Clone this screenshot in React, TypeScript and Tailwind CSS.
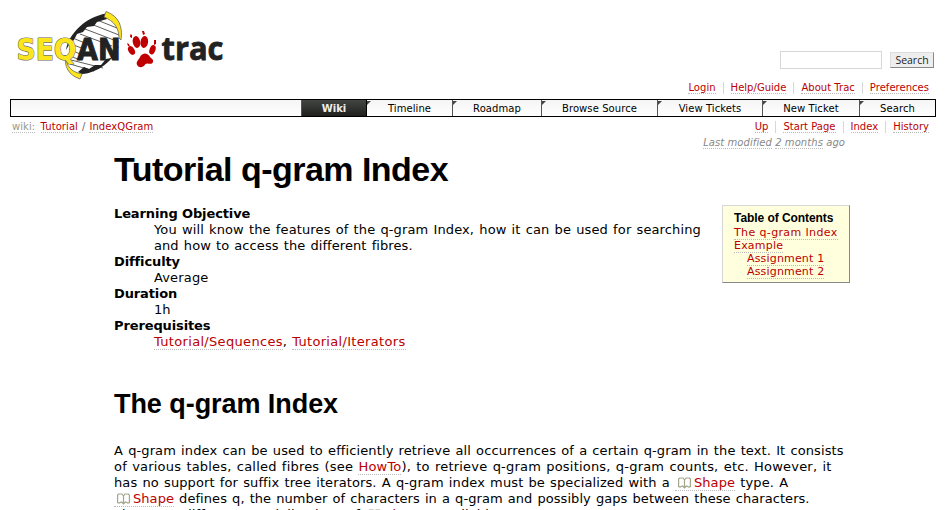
import React from "react";

const V = "font-['DejaVu_Sans',Verdana,sans-serif]";

function A({ children, tone = "text-[#b00]" }: { children: React.ReactNode; tone?: string }) {
  return <a className={`border-b border-dotted border-[#bbb] ${tone}`}>{children}</a>;
}

function Line({ children, className = "" }: { children: React.ReactNode; className?: string }) {
  return <div className={`h-4 whitespace-nowrap ${className}`}>{children}</div>;
}

function Book() {
  return (
    <svg className="ml-[3px] mr-[3px] inline-block h-[12px] w-[13px] align-[-2px]" viewBox="0 0 13 12" fill="none" stroke="#a5a58c" strokeWidth="1.2">
      <path d="M6.5 3 L5 1 H1.6 L.6 2 V9.500 L2 10 L4.600 9 L6.5 11 L8.400 9 L11 10 L12.4 9.500 V2 L11.4 1 H8 Z M6.5 3 V11" />
    </svg>
  );
}

function Logo() {
  return (
    <svg className="block h-[85px] w-[240px]" viewBox="0 0 240 85">
      <path d="M66 60 C67 43 79 25 105 15 C121 22 123 34 118 46 C112 61 100 71 83 74 C70 71 66 66 66 60Z" fill="white" />
      <g stroke="#333" strokeWidth=".8" fill="none">
        <path d="M97 20L117 28M91 24L119 35M85 29L119 42M80 34L112 46M75 39L90 45M71 44L84 49M69 49L80 54M68 55L80 60M67 59L103 68M70 64L94 71" />
      </g>
      <path d="M66 50 C69 33 86 17 106 13.5 L107 19 L97 22 L94 26 L87 27 L83 32 L77 34 L74 40 L70 43Z" fill="#222" />
      <path d="M78 72 L84 67 L89 69 L95 65 L101 65 L106 59 L111 58 L112 52 L119 46 C113 61 98 73 82 74Z" fill="#222" />
      <path d="M104 17 L106 11.5 C119 16 123 27 121 40 L119 38 C119 28 114 21 104 17Z" fill="#fce51c" stroke="#555" strokeWidth=".7" />
      <path d="M65.500 55 C66 66 71 72 82 74 L80 79 C68 75 64 66 65.500 55Z" fill="#fce51c" stroke="#555" strokeWidth=".7" />
      <text x="16.500" y="60" fontFamily="DejaVu Sans" fontWeight="bold" fontSize="30" textLength="60" lengthAdjust="spacingAndGlyphs" fill="#fce51c" stroke="#666" strokeWidth="1.200" paintOrder="stroke" strokeLinejoin="round">SEQ</text>
      <text x="77" y="60" fontFamily="DejaVu Sans" fontWeight="bold" fontSize="30" textLength="43.500" lengthAdjust="spacingAndGlyphs" fill="#222" stroke="#222" strokeWidth="1">AN</text>
      <g fill="#c00000">
        <ellipse cx="131.500" cy="50.500" rx="3" ry="4.700" transform="rotate(-30 131.500 50.500)" />
        <ellipse cx="136.500" cy="42" rx="3.700" ry="6" transform="rotate(-12 136.500 42)" />
        <ellipse cx="144.300" cy="42" rx="3.800" ry="6" transform="rotate(8 144.300 42)" />
        <ellipse cx="152.500" cy="49.800" rx="2.900" ry="4.800" transform="rotate(20 152.500 49.800)" />
        <path d="M137.500 65.500 C135 62 139 60 140.500 56 C143 52.500 147 52.500 149.500 56 C150 58.500 154 58.500 153 62 C151 66 148 62 145.500 64 C143 68 139 68 137.500 65.500Z" />
        <path d="M127 43l2 1 1 3-2-1zM130.500 34l1.500 1 0 3-2-1zM142 31l2 0 1 3-2 1zM154 40l2 0 0 4-2 1z" />
      </g>
      <text x="161.500" y="59.500" fontFamily="Open Sans" fontWeight="bold" fontSize="33" textLength="62" lengthAdjust="spacingAndGlyphs" fill="#222" stroke="#222" strokeWidth=".8">trac</text>
    </svg>
  );
}

const tabs = [
  { t: "Timeline", w: "w-[85px]" },
  { t: "Roadmap", w: "w-[89px]" },
  { t: "Browse Source", w: "w-[116px]" },
  { t: "View Tickets", w: "w-[105px]" },
  { t: "New Ticket", w: "w-[97px]" },
  { t: "Search", w: "w-[76px]" },
];

function Links({ items }: { items: string[] }) {
  return (
    <div className="flex justify-end text-[10px] leading-[12px] tracking-[0.03px]">
      {items.map((t, i) => (
        <div key={t} className={`px-[7px] ${i < items.length - 1 ? "border-r border-[#d7d7d7]" : ""}`}>
          <A>{t}</A>
        </div>
      ))}
    </div>
  );
}

export default function App() {
  return (
    <div className={`h-[510px] w-[946px] overflow-hidden bg-white text-black ${V}`}>
      <header className="flex h-[82px] justify-between">
        <Logo />
        <div className="mr-[12px] mt-[51px] flex h-[18px] gap-2">
          <div className="h-[18px] w-[102px] border border-[#d7d7d7]" />
          <button className="mt-px h-4 w-11 border border-[#ddd] border-b-[#888] border-r-[#888] bg-[#eee] font-['Open_Sans'] text-[10.5px] leading-[14px] text-[#222]">Search</button>
        </div>
      </header>
      <div className="mr-[10px]"><Links items={["Login", "Help/Guide", "About Trac", "Preferences"]} /></div>
      <nav className="ml-[10px] mt-[5px] flex h-[18px] w-[926px] justify-end border border-black bg-gradient-to-b from-[#f5f5f5] to-white text-[10px] leading-[18px]">
        <div className="h-4 w-[66px] border-x border-l-[#555] border-r-black bg-gradient-to-b from-[#444643] to-[#20211f] text-center font-bold text-[#eee]">Wiki</div>
        {tabs.map((x, i) => (
          <div key={x.t} className={`flex h-4 ${x.w} ${i ? "border-l border-[#555]" : ""}`}>
            <svg className="mt-px h-1 w-1 shrink-0" viewBox="0 0 4 4"><path d="M0 0H4L0 4Z" fill="#444" /></svg>
            <span className="grow pr-[4px] text-center tracking-[0.08px]">{x.t}</span>
          </div>
        ))}
      </nav>
      <div className="mr-[10px] mt-[4px] flex justify-between">
        <div className="ml-3 text-[10px] leading-[12px] tracking-[0.08px]">
          <span className="mr-[2px]"><A tone="text-[#998]">wiki:</A></span> <A>Tutorial</A>
          <span className="mx-1 text-[#666]">/</span>
          <A>IndexQGram</A>
        </div>
        <Links items={["Up", "Start Page", "Index", "History"]} />
      </div>
      <div className="mr-[101px] mt-[3px] text-right text-[10px] italic leading-[13px] tracking-[0.07px] text-[#888]">
        <A tone="text-[#888]">Last modified</A> <A tone="text-[#888]">2 months</A> ago
      </div>
      <main className="ml-[114px] w-[736px]">
        <h1 className="h-[57px] whitespace-nowrap font-['Liberation_Sans',Arial,sans-serif] text-[34px] font-bold leading-[40px] tracking-[-0.52px]">Tutorial q-gram Index</h1>
        <div className="flex justify-between text-[13px] leading-4">
          <div>
            <Line className="font-bold tracking-[-0.12px]">Learning Objective</Line>
            <Line className="pl-10 tracking-[0.12px] [word-spacing:0.9px]">You will know the features of the q-gram Index, how it can be used for searching</Line>
            <Line className="pl-10 tracking-[0.08px] [word-spacing:0.9px]">and how to access the different fibres.</Line>
            <Line className="font-bold tracking-[-0.12px]">Difficulty</Line>
            <Line className="pl-10 tracking-[0.15px]">Average</Line>
            <Line className="font-bold tracking-[-0.12px]">Duration</Line>
            <Line className="pl-10">1h</Line>
            <Line className="font-bold tracking-[-0.12px]">Prerequisites</Line>
            <Line className="pl-10 tracking-[0.32px] [word-spacing:0.4px]"><A>Tutorial/Sequences</A>, <A>Tutorial/Iterators</A></Line>
          </div>
          <aside className="-mt-px h-[78px] w-[128px] whitespace-nowrap border border-[#d7d7d7] border-b-[#888] border-r-[#888] bg-[#ffffdd] pl-[11px] pt-[6px] text-[11px] leading-[13px]">
            <div className="mb-px font-['Liberation_Sans',Arial] text-[12px] font-bold tracking-[-0.06px]">Table of Contents</div>
            <div className="tracking-[0.37px]"><A>The q-gram Index</A></div>
            <div className="tracking-[0.2px]"><A>Example</A></div>
            <div className="pl-[13px] tracking-[0.17px]"><A>Assignment 1</A></div>
            <div className="pl-[13px] tracking-[0.17px]"><A>Assignment 2</A></div>
          </aside>
        </div>
        <h2 className="mt-[36px] h-[57px] font-['Liberation_Sans',Arial,sans-serif] text-[27px] font-bold leading-[36px] tracking-[-0.06px]">The q-gram Index</h2>
        <div className="text-[13px] leading-4 [word-spacing:0.9px]">
          <Line className="tracking-[0.11px]">A q-gram index can be used to efficiently retrieve all occurrences of a certain q-gram in the text. It consists</Line>
          <Line className="tracking-[0.2px]">of various tables, called fibres (see <A>HowTo</A>), to retrieve q-gram positions, q-gram counts, etc. However, it</Line>
          <Line className="tracking-[0.11px]">has no support for suffix tree iterators. A q-gram index must be specialized with a <A><Book />Shape</A> type. A</Line>
          <Line className="tracking-[0.06px]"><A><Book />Shape</A> defines q, the number of characters in a q-gram and possibly gaps between these characters.</Line>
          <Line className="tracking-[0.11px]">There are different specializations of <A><Book />Shapes</A> available.</Line>
        </div>
      </main>
    </div>
  );
}
